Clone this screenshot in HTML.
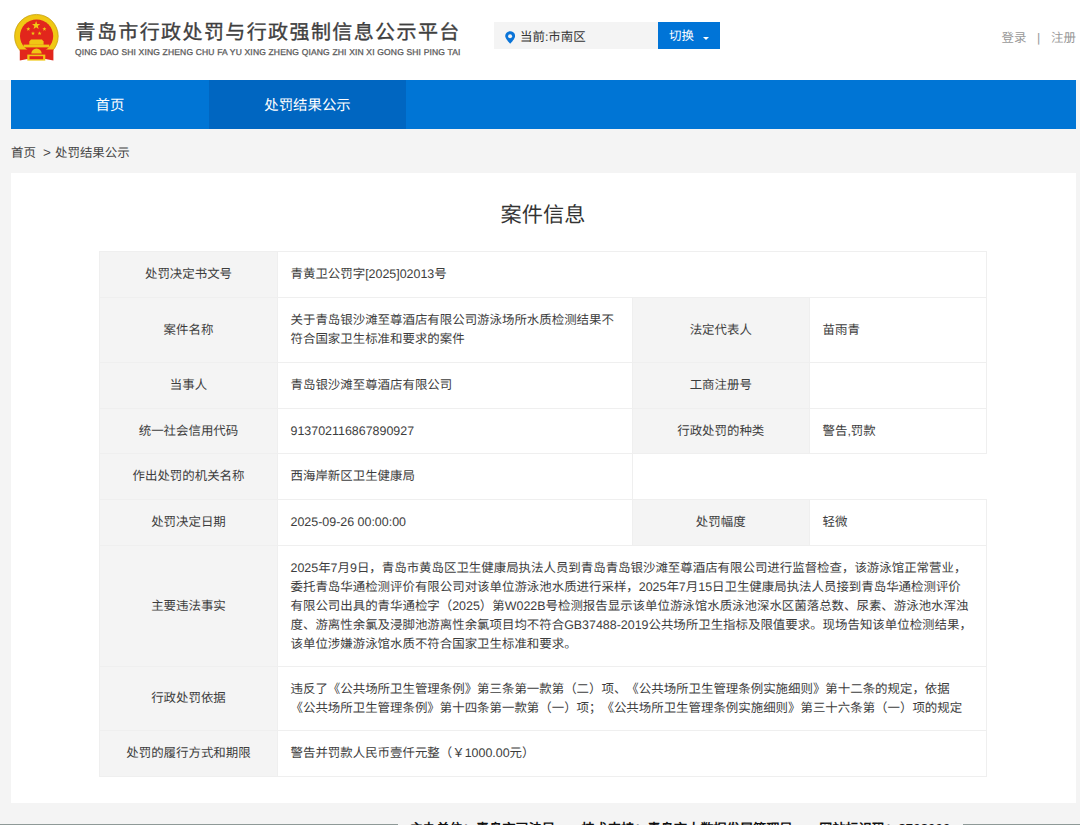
<!DOCTYPE html>
<html lang="zh-CN"><head><meta charset="utf-8">
<style>
*{margin:0;padding:0;box-sizing:border-box;}
html,body{width:1080px;height:825px;overflow:hidden;}
body{background:#f4f4f4;font-family:"Liberation Sans",sans-serif;color:#333;font-size:12.45px;position:relative;text-rendering:geometricPrecision;text-spacing-trim:space-all;}
.abs{position:absolute;}
#hdr{left:0;top:0;width:1080px;height:80px;background:#fff;}
#emb{left:10px;top:10px;width:54px;height:56px;}
#ttl{left:75.5px;top:18.5px;font-size:20px;line-height:28px;color:#3f3f3f;letter-spacing:1.4px;white-space:nowrap;font-weight:400;-webkit-text-stroke:0.35px #3f3f3f;}
#sub{left:75px;top:48px;font-size:8.5px;line-height:9px;color:#5c5c5c;white-space:nowrap;font-weight:400;letter-spacing:0.17px;-webkit-text-stroke:0.3px #5c5c5c;}
#loc{left:494px;top:22px;width:164px;height:27px;background:#f4f4f4;}
#pin{left:505px;top:30.8px;width:10.4px;height:13px;}
#loctxt{left:520px;top:28.5px;line-height:17px;font-size:12.45px;color:#333;white-space:nowrap;}
#btn{left:658px;top:22px;width:62px;height:27px;background:#0074d7;color:#fff;}
#btntxt{left:669px;top:28px;line-height:17px;color:#fff;white-space:nowrap;}
#caret{left:702.5px;top:36.5px;width:0;height:0;border-left:3.5px solid transparent;border-right:3.5px solid transparent;border-top:3.5px solid #fff;}
.login{top:30px;line-height:17px;color:#999;white-space:nowrap;}
#nav{left:11px;top:80px;width:1065px;height:49px;background:#0075d5;}
.ni{top:80px;height:49px;line-height:49px;padding-top:1.5px;color:#fff;font-size:14.4px;text-align:center;}
#n1{left:11px;width:198px;}
#n2{left:209px;width:197px;background:#0066c1;}
.crumb{top:144.5px;line-height:17px;white-space:nowrap;color:#444;}
#box{left:11px;top:173px;width:1065px;height:630px;background:#fff;}
#h1{left:0;top:201.5px;width:1086px;text-align:center;font-size:21.2px;line-height:28px;color:#333;}
table{position:absolute;left:99px;top:251px;width:887px;border-collapse:collapse;table-layout:fixed;}
td{border:1px solid #efefef;font-size:12.45px;line-height:19px;color:#3d3d3d;padding:9px 13.5px 9px 12.5px;vertical-align:middle;}
td.l{background:#f4f4f4;text-align:center;padding-left:8px;padding-right:8px;}
#foot{left:0;top:824px;width:1080px;height:1px;}
</style></head><body>
<div id="hdr" class="abs"></div>
<svg id="emb" class="abs" viewBox="10 10 54 56">
<circle cx="36.4" cy="36.2" r="21.8" fill="#e6be10" stroke="#c9a514" stroke-width="0.8"/>
<circle cx="36.4" cy="36.2" r="21" fill="#f0c814"/>
<circle cx="36.6" cy="36" r="16.6" fill="#e2261c"/>
<polygon points="36.10,21.10 37.16,23.94 40.19,24.07 37.82,25.96 38.63,28.88 36.10,27.21 33.57,28.88 34.38,25.96 32.01,24.07 35.04,23.94" fill="#f0c814"/><polygon points="28.30,26.90 28.82,28.29 30.30,28.35 29.14,29.27 29.53,30.70 28.30,29.88 27.07,30.70 27.46,29.27 26.30,28.35 27.78,28.29" fill="#f0c814"/><polygon points="44.40,26.90 44.92,28.29 46.40,28.35 45.24,29.27 45.63,30.70 44.40,29.88 43.17,30.70 43.56,29.27 42.40,28.35 43.88,28.29" fill="#f0c814"/><polygon points="33.00,31.30 33.52,32.69 35.00,32.75 33.84,33.67 34.23,35.10 33.00,34.28 31.77,35.10 32.16,33.67 31.00,32.75 32.48,32.69" fill="#f0c814"/><polygon points="39.60,31.30 40.12,32.69 41.60,32.75 40.44,33.67 40.83,35.10 39.60,34.28 38.37,35.10 38.76,33.67 37.60,32.75 39.08,32.69" fill="#f0c814"/>
<path d="M31 39.5 L42 39.5 L43.6 41.5 L43.6 44.8 L29.3 44.8 L29.3 41.5 Z" fill="#f0c814"/>
<path d="M19.8 49.5 L53.4 49.5 L53.4 60.5 L45.5 59 L27.5 59 L19.8 60.5 Z" fill="#e2261c"/>
<rect x="23.6" y="44.6" width="25.7" height="2.8" fill="#f0c814"/>
<path d="M31.3 53.6 A5.2 5.2 0 0 1 41.7 53.6 Z" fill="#f0c814"/>
<rect x="27.3" y="54.6" width="18" height="6" fill="#f0c814"/>
<rect x="29.5" y="56.2" width="13.6" height="3" fill="#e2261c"/>
</svg>
<div id="ttl" class="abs">青岛市行政处罚与行政强制信息公示平台</div>
<div id="sub" class="abs">QING DAO SHI XING ZHENG CHU FA YU XING ZHENG QIANG ZHI XIN XI GONG SHI PING TAI</div>
<div id="loc" class="abs"></div>
<svg id="pin" class="abs" viewBox="0 0 10.4 13"><path d="M5.2 0.2C2.3 0.2 0.2 2.3 0.2 5 0.2 7.8 5.2 12.8 5.2 12.8S10.2 7.8 10.2 5C10.2 2.3 8.1 0.2 5.2 0.2Z" fill="#0a74d8"/><circle cx="5.1" cy="5.2" r="2" fill="#f4f4f4"/></svg>
<div id="loctxt" class="abs">当前:市南区</div>
<div id="btn" class="abs"></div>
<div id="btntxt" class="abs">切换</div>
<div id="caret" class="abs"></div>
<div class="abs login" style="left:1001.5px">登录</div><div class="abs login" style="left:1037px">|</div><div class="abs login" style="left:1051px">注册</div>
<div id="nav" class="abs"></div>
<div id="n1" class="abs ni">首页</div>
<div id="n2" class="abs ni">处罚结果公示</div>
<div class="abs crumb" style="left:11px">首页</div><div class="abs crumb" style="left:43px;font-size:13.5px;top:144px">&gt;</div><div class="abs crumb" style="left:55px">处罚结果公示</div>
<div id="box" class="abs"></div>
<div id="h1" class="abs">案件信息</div>
<table>
<colgroup><col style="width:178px"><col style="width:354.5px"><col style="width:177.5px"><col style="width:177px"></colgroup>
<tr style="height:46px"><td class="l">处罚决定书文号</td><td colspan="3">青黄卫公罚字[2025]02013号</td></tr>
<tr style="height:65px"><td class="l">案件名称</td><td>关于青岛银沙滩至尊酒店有限公司游泳场所水质检测结果不符合国家卫生标准和要求的案件</td><td class="l">法定代表人</td><td>苗雨青</td></tr>
<tr style="height:46px"><td class="l">当事人</td><td>青岛银沙滩至尊酒店有限公司</td><td class="l">工商注册号</td><td></td></tr>
<tr style="height:45px"><td class="l">统一社会信用代码</td><td>913702116867890927</td><td class="l">行政处罚的种类</td><td>警告,罚款</td></tr>
<tr style="height:46px"><td class="l">作出处罚的机关名称</td><td>西海岸新区卫生健康局</td><td colspan="2" style="border-right-color:#fff"></td></tr>
<tr style="height:46px"><td class="l">处罚决定日期</td><td>2025-09-26 00:00:00</td><td class="l">处罚幅度</td><td>轻微</td></tr>
<tr style="height:121px"><td class="l">主要违法事实</td><td colspan="3">2025年7月9日，青岛市黄岛区卫生健康局执法人员到青岛青岛银沙滩至尊酒店有限公司进行监督检查，该游泳馆正常营业，委托青岛华通检测评价有限公司对该单位游泳池水质进行采样，2025年7月15日卫生健康局执法人员接到青岛华通检测评价有限公司出具的青华通检字（2025）第W022B号检测报告显示该单位游泳馆水质泳池深水区菌落总数、尿素、游泳池水浑浊度、游离性余氯及浸脚池游离性余氯项目均不符合GB37488-2019公共场所卫生指标及限值要求。现场告知该单位检测结果，该单位涉嫌游泳馆水质不符合国家卫生标准和要求。</td></tr>
<tr style="height:64px"><td class="l">行政处罚依据</td><td colspan="3">违反了《公共场所卫生管理条例》第三条第一款第（二）项、《公共场所卫生管理条例实施细则》第十二条的规定，依据《公共场所卫生管理条例》第十四条第一款第（一）项；《公共场所卫生管理条例实施细则》第三十六条第（一）项的规定</td></tr>
<tr style="height:46px"><td class="l">处罚的履行方式和期限</td><td colspan="3">警告并罚款人民币壹仟元整（￥1000.00元）</td></tr>
</table>
<div class="abs" style="left:0;top:824px;width:398px;height:1px;background:#8e9997"></div><div class="abs" style="left:963px;top:824px;width:117px;height:1px;background:#8e9997"></div><div class="abs" style="left:410px;top:819.5px;width:540px;height:5.5px;overflow:hidden;line-height:17px;color:#111;white-space:nowrap;letter-spacing:0.2px;font-weight:bold;font-size:13px">主办单位：青岛市司法局　　技术支持：青岛市大数据发展管理局　　网站标识码：3702000000</div>
</body></html>
